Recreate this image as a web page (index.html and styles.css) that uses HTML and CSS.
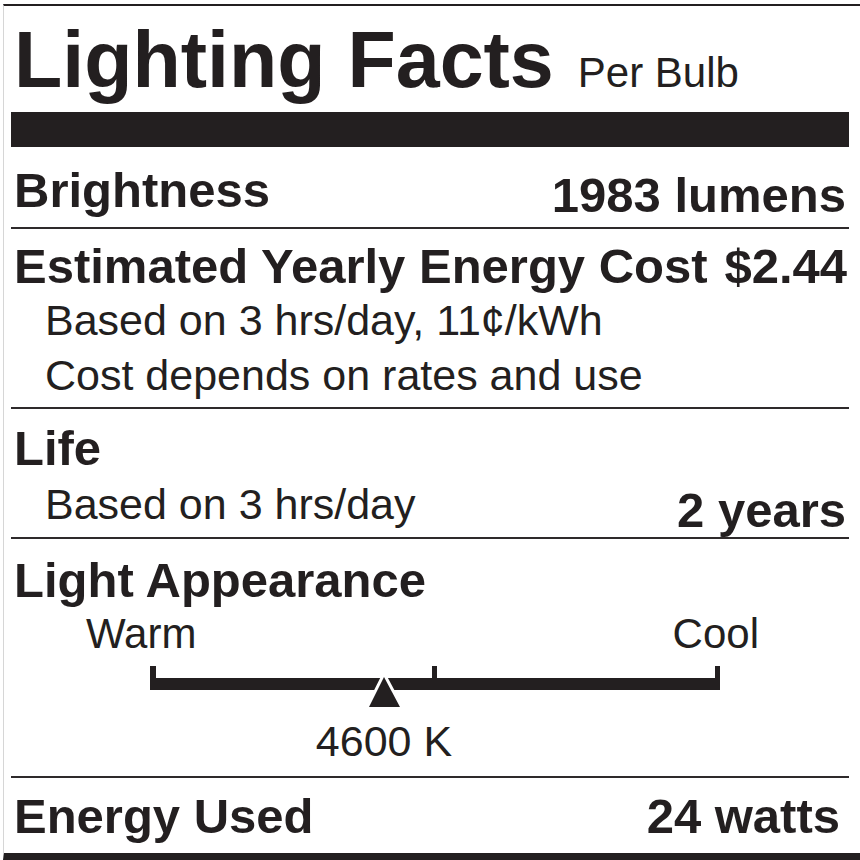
FILE: index.html
```html
<!DOCTYPE html>
<html>
<head>
  <link rel="stylesheet" href="styles.css">
</head>
<body>
  <div class="label">
    <div class="title-row">
      <h1>Lighting Facts</h1>
      <span class="per">Per Bulb</span>
    </div>
    <div class="bar"></div>

    <div class="section brightness">
      <div class="row">
        <span class="head">Brightness</span>
        <span class="value">1983 lumens</span>
      </div>
    </div>

    <div class="section cost">
      <div class="row">
        <span class="head wide">Estimated Yearly Energy Cost</span>
        <span class="value wide flush">$2.44</span>
      </div>
      <div class="sub">
        <div>Based on 3 hrs/day, 11¢/kWh</div>
        <div>Cost depends on rates and use</div>
      </div>
    </div>

    <div class="section life">
      <div class="head">Life</div>
      <div class="row life-row">
        <span class="sub">Based on 3 hrs/day</span>
        <span class="value low">2 years</span>
      </div>
    </div>

    <div class="section appearance">
      <div class="head">Light Appearance</div>
      <div class="scale">
        <div class="scale-labels">
          <span>Warm</span>
          <span>Cool</span>
        </div>
      </div>
      <svg class="scale-bar" width="838" height="58" viewBox="0 0 838 58">
        <rect x="139" y="12" width="6" height="24" fill="#231f20"/>
        <rect x="421" y="12" width="5" height="24" fill="#231f20"/>
        <rect x="704" y="12" width="5" height="24" fill="#231f20"/>
        <rect x="139" y="24" width="570" height="12" fill="#231f20"/>
        <polygon points="373,23 358,53 389,53" fill="#231f20" stroke="#fff" stroke-width="6" stroke-linejoin="miter" paint-order="stroke"/>
      </svg>
      <div class="kelvin">4600 K</div>
    </div>

    <div class="section energy">
      <div class="row">
        <span class="head">Energy Used</span>
        <span class="value watts">24 watts</span>
      </div>
    </div>
  </div>
</body>
</html>
```

FILE: styles.css
```css
body {
  margin: 0;
  width: 860px;
  height: 860px;
  overflow: hidden;
  background: #fff;
  color: #231f20;
  font-family: "Liberation Sans", Arial, sans-serif;
}

.label {
  margin: 4px 0 0 3px;
  padding: 15px 11px 0 7px;
  border-top: 2px solid #231f20;
  border-left: 1px solid #d6d6d6;
  border-bottom: 7px solid #231f20;
}

.title-row {
  display: flex;
  align-items: baseline;
  height: 78px;
  padding-left: 3px;
}

h1 {
  margin: 0;
  font-size: 79px;
  line-height: 78px;
  font-weight: bold;
}

.per {
  margin-left: 24px;
  font-size: 42px;
  line-height: 42px;
}

.bar {
  margin-top: 13px;
  height: 35px;
  background: #231f20;
}

.section {
  border-bottom: 2px solid #2e2a2b;
}

.section:last-child {
  border-bottom: none;
}

.row {
  display: flex;
  justify-content: space-between;
  align-items: flex-start;
}

.head {
  font-size: 49px;
  line-height: 48px;
  font-weight: bold;
  padding-left: 3px;
}

.head.wide,
.value.wide {
  font-size: 49px;
  line-height: 49px;
}

.value {
  font-size: 49px;
  line-height: 48px;
  font-weight: bold;
  padding-right: 3px;
}

.value.flush {
  padding-right: 2px;
}

.sub {
  font-size: 43px;
  line-height: 55px;
  padding-left: 34px;
}

.brightness {
  padding: 19px 0 8px;
}

.brightness .value {
  margin-top: 5px;
}

.cost {
  padding: 13px 0 4px;
}

.cost .sub {
  margin-top: 2px;
}

.life {
  padding: 15px 0 3px;
}

.life-row {
  margin-top: 5px;
}

.value.low {
  margin-top: 9px;
}

.appearance {
  padding: 17px 0 14px;
}

.scale {
  margin: 9px 0 0 75px;
  width: 673px;
}

.scale-labels {
  display: flex;
  justify-content: space-between;
  font-size: 42px;
  line-height: 41px;
}

.scale-bar {
  display: block;
}

.kelvin {
  margin: 9px 0 0 273px;
  width: 200px;
  text-align: center;
  font-size: 43px;
  line-height: 41px;
}

.energy {
  padding: 14px 0 13px;
}

.value.watts {
  padding-right: 9px;
}
```
